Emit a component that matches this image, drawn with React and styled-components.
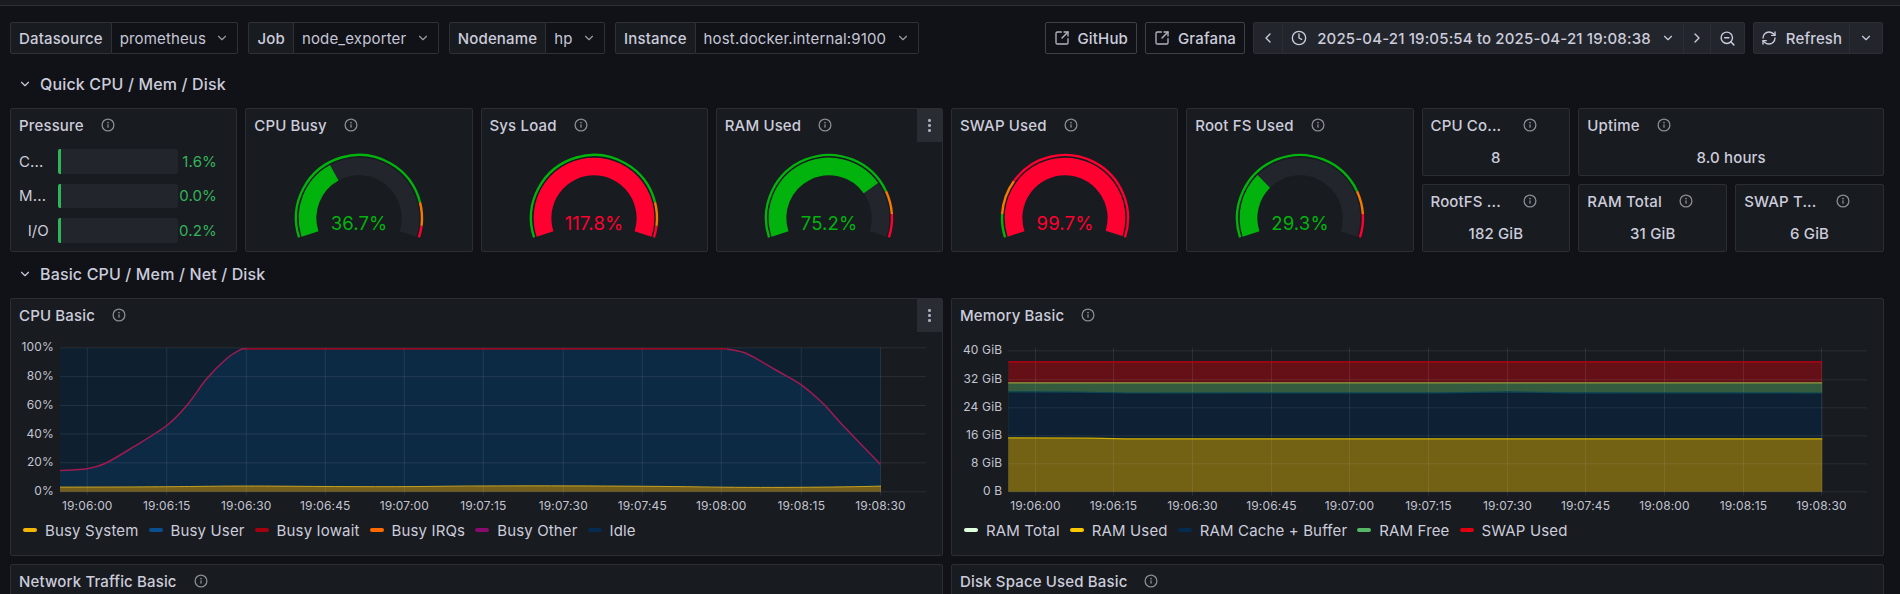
import React from "react";
import styled, { createGlobalStyle } from "styled-components";
import {
  ChevronDown,
  ChevronLeft,
  ChevronRight,
  Clock,
  RefreshCw,
  SquareArrowOutUpRight,
  ZoomOut,
} from "lucide-react";

const GlobalStyle = createGlobalStyle`
  html, body {
    margin: 0;
    height: 594px;
    overflow: hidden;
    background: #111217;
    color: #ccccdc;
    font-family: Inter, "Noto Sans", sans-serif;
    font-size: 15px;
    letter-spacing: 0.15px;
  }
  * { box-sizing: border-box; }
`;

const TopStrip = styled.div`
  height: 6px;
  background: #181b1f;
  border-bottom: 1px solid #2c2e34;
`;

const Page = styled.div`
  padding: 0 16px 0 10px;
`;

const Toolbar = styled.div`
  display: flex;
  align-items: center;
  height: 32px;
  margin-top: 16px;
  gap: 10px;
`;

const VarGroup = styled.div`
  display: flex;
  height: 32px;
`;

const VarLabel = styled.div`
  display: flex;
  align-items: center;
  padding: 0 8px;
  font-weight: 500;
  background: #181b1f;
  border: 1px solid #2f3137;
  border-radius: 2px 0 0 2px;
`;

const VarValue = styled.div`
  display: flex;
  align-items: center;
  gap: 9.5px;
  padding: 0 8px;
  background: #111217;
  border: 1px solid #2f3137;
  border-left: 0;
  border-radius: 0 2px 2px 0;
  color: #c5c6d6;
`;

const RightTools = styled.div`
  display: flex;
  align-items: center;
  margin-left: auto;
  margin-right: 1px;
  gap: 8px;
`;

const LinkButton = styled.div`
  display: flex;
  align-items: center;
  gap: 8px;
  height: 32px;
  padding: 0 8px;
  font-weight: 500;
  border: 1px solid #3f4148;
  border-radius: 2px;
`;

const ToolGroup = styled.div`
  display: flex;
  height: 32px;
  background: #22252b;
  border: 1px solid #2c2e34;
  border-radius: 2px;
`;

const ToolCell = styled.div`
  display: flex;
  align-items: center;
  justify-content: center;
  gap: ${(p) => p.$gap || 8}px;
  width: ${(p) => p.$w}px;
  font-weight: 500;
  & + & {
    border-left: 1px solid #2c2e34;
  }
`;

const SectionRow = styled.div`
  display: flex;
  align-items: center;
  gap: 8px;
  height: ${(p) => p.$h}px;
  padding: ${(p) => p.$pad};
  font-size: 16px;
  font-weight: 500;
`;

const Grid = styled.div`
  display: grid;
  grid-template-columns: repeat(24, 1fr);
  gap: 8px;
  grid-auto-rows: ${(p) => p.$row}px;
`;

const Panel = styled.div`
  position: relative;
  grid-column: span ${(p) => p.$span};
  grid-row: span ${(p) => p.$rows || 1};
  background: #181b1f;
  border: 1px solid #2b2d33;
  border-radius: 2px;
  overflow: hidden;
`;

const Header = styled.div`
  display: flex;
  align-items: center;
  gap: 16px;
  height: 32px;
  padding-left: 8px;
`;

const Title = styled.div`
  font-weight: 500;
  white-space: nowrap;
  ${(p) => p.$w && `width: ${p.$w}px;`}
`;

const Kebab = styled.div`
  position: absolute;
  top: 0;
  right: 0;
  display: flex;
  flex-direction: column;
  align-items: center;
  justify-content: center;
  gap: 2.5px;
  width: 25px;
  height: 33px;
  background: #2a2c33;
  i {
    width: 2.5px;
    height: 2.5px;
    border-radius: 50%;
    background: #a9aab8;
  }
`;

const GaugeBody = styled.div`
  display: flex;
  justify-content: center;
`;

const PressureList = styled.div`
  display: flex;
  flex-direction: column;
  gap: 10px;
  padding: 8px 0 0 8px;
`;

const PressureRow = styled.div`
  display: flex;
  align-items: center;
  height: 24.5px;
`;

const PressureLabel = styled.div`
  width: 30px;
  margin-right: 9px;
  text-align: ${(p) => (p.$right ? "right" : "left")};
  white-space: nowrap;
`;

const PressureBar = styled.div`
  width: 120px;
  height: 100%;
  background: #22252b;
  border-radius: 2px;
  overflow: hidden;
  &::before {
    content: "";
    display: block;
    width: 3px;
    height: 100%;
    background: #2fb65a;
  }
`;

const PressureValue = styled.div`
  width: 39px;
  text-align: right;
  font-size: 15px;
  color: #34b45b;
`;

const StatValue = styled.div`
  text-align: center;
  font-weight: 500;
  line-height: 33px;
`;

const Legend = styled.div`
  display: flex;
  align-items: center;
  gap: 10px;
  height: 20px;
  padding-left: 12px;
`;

const LegendItem = styled.div`
  display: flex;
  align-items: center;
  gap: 8px;
  &::before {
    content: "";
    width: 14px;
    height: 4px;
    border-radius: 2px;
    background: ${(p) => p.$color};
  }
`;

const ChartSvg = styled.svg`
  display: block;
  text {
    font-family: Inter, sans-serif;
    font-size: 12px;
    fill: #c3c4d2;
  }
`;

const InfoIcon = () => (
  <svg width="16" height="16" viewBox="0 0 16 16" fill="none" style={{ flex: "none" }}>
    <circle cx="8" cy="8" r="5.9" stroke="#8b8c95" strokeWidth="1.3" />
    <circle cx="8" cy="5.6" r="0.85" fill="#8b8c95" />
    <rect x="7.35" y="7.2" width="1.3" height="3.5" rx="0.5" fill="#8b8c95" />
  </svg>
);

const PanelHead = ({ title, w }) => (
  <Header>
    <Title $w={w}>{title}</Title>
    <InfoIcon />
  </Header>
);

const GREEN = "#02b30e";
const ORANGE = "#f77a00";
const RED = "#ff0030";
const TRACK = "#22252b";

const point = (cx, cy, r, t) => {
  const a = ((-18 + 216 * t) * Math.PI) / 180;
  return [cx - r * Math.cos(a), cy - r * Math.sin(a)];
};

const arc = (cx, cy, r, t1, t2) => {
  const [x1, y1] = point(cx, cy, r, t1);
  const [x2, y2] = point(cx, cy, r, t2);
  const large = (t2 - t1) * 216 > 180 ? 1 : 0;
  return `M${x1} ${y1}A${r} ${r} 0 ${large} 1 ${x2} ${y2}`;
};

const Gauge = ({ value, low, high, color }) => {
  const fill = Math.min(value / 100, 1);
  return (
    <GaugeBody>
      <svg width="140" height="102" viewBox="0 0 140 102" fill="none">
        <path d={arc(70, 77, 51.5, 0, 1)} stroke={TRACK} strokeWidth="17.7" />
        <path d={arc(70, 77, 51.5, 0, fill)} stroke={color} strokeWidth="17.7" />
        <path d={arc(70, 77, 63, 0, low)} stroke={GREEN} strokeWidth="2.4" />
        <path d={arc(70, 77, 63, low, high)} stroke={ORANGE} strokeWidth="2.4" />
        <path d={arc(70, 77, 63, high, 1)} stroke={RED} strokeWidth="2.4" />
        <text
          x="70"
          y="82.4"
          textAnchor="middle"
          dominantBaseline="central"
          fill={color}
          fontFamily="Inter, sans-serif"
          fontSize="18.5"
        >
          {value.toFixed(1)}%
        </text>
      </svg>
    </GaugeBody>
  );
};

// catmull-rom through the points, good enough for these curves
const smooth = (pts) => {
  let d = `M${pts[0][0]} ${pts[0][1]}`;
  for (let i = 0; i < pts.length - 1; i++) {
    const p0 = pts[i - 1] || pts[i];
    const p1 = pts[i];
    const p2 = pts[i + 1];
    const p3 = pts[i + 2] || p2;
    const c1x = p1[0] + (p2[0] - p0[0]) / 6;
    const c1y = p1[1] + (p2[1] - p0[1]) / 6;
    const c2x = p2[0] - (p3[0] - p1[0]) / 6;
    const c2y = p2[1] - (p3[1] - p1[1]) / 6;
    d += `C${c1x} ${c1y} ${c2x} ${c2y} ${p2[0]} ${p2[1]}`;
  }
  return d;
};

const TIMES = [
  "19:06:00", "19:06:15", "19:06:30", "19:06:45", "19:07:00", "19:07:15",
  "19:07:30", "19:07:45", "19:08:00", "19:08:15", "19:08:30",
];

const CPU_TICKS = [87.3, 166.7, 246.3, 325.3, 404.3, 483.3, 563.3, 642.3, 721.3, 801.3, 880.5];
const MEM_TICKS = [1035.3, 1113.3, 1192.3, 1271.3, 1349.3, 1428.3, 1507.3, 1585.3, 1664.3, 1743.3, 1821.3];

const CPU_LINE_UP = [
  [60, 470], [87, 468.3], [105, 463], [133, 446.7], [166.7, 425], [186.7, 405],
  [206.7, 378.3], [226.7, 358], [240, 349.3], [246, 348.4],
];
const CPU_LINE_DOWN = [
  [726.7, 348.4], [743, 351.7], [756.7, 358.3], [776.7, 370], [801.3, 384.3],
  [823.3, 403.3], [843, 425], [880.5, 464],
];

const gridStroke = "rgba(204,204,220,0.11)";

// x/y in these charts are page coordinates, the viewBox shifts them into the panel
const Axes = ({ yTicks, xTicks, left, right }) => (
  <>
    {yTicks.map(([label, y]) => (
      <g key={label}>
        <line x1={left} x2={right} y1={y} y2={y} stroke={gridStroke} />
        <text x={left - 6} y={y + 3.6} textAnchor="end">{label}</text>
      </g>
    ))}
    {xTicks.map((x, i) => (
      <g key={x}>
        <line x1={x} x2={x} y1="347" y2="495" stroke={gridStroke} />
        <text x={x} y="509.5" textAnchor="middle">{TIMES[i]}</text>
      </g>
    ))}
  </>
);

const CpuChart = () => {
  const up = smooth(CPU_LINE_UP);
  const down = smooth(CPU_LINE_DOWN);
  return (
    <ChartSvg width="931" height="189" viewBox="11 330.5 931 189" fill="none">
      <rect x="60" y="347.3" width="821" height="144" fill="#0e2030" />
      <path
        d={`${up}L726.7 348.4${down.replace(/^M[^C]+/, "")}L880.5 491.3L60 491.3Z`}
        fill="#0d2a45"
      />
      <path
        d="M60 486.6C200 486.6 210 485.2 270 485.6S380 486.6 440 485.8S640 485.4 700 486.4S840 486.8 881 485.6V491.3H60Z"
        fill="#735e1c"
      />
      <path
        d="M60 486.6C200 486.6 210 485.2 270 485.6S380 486.6 440 485.8S640 485.4 700 486.4S840 486.8 881 485.6"
        stroke="#c7a220"
        strokeWidth="1"
      />
      <Axes
        left={60}
        right={926}
        xTicks={CPU_TICKS}
        yTicks={[["100%", 347.3], ["80%", 376.1], ["60%", 405], ["40%", 433.4], ["20%", 462.3], ["0%", 491.3]]}
      />
      <path d={up} stroke="#a01a50" strokeWidth="1.5" />
      <path d="M246 348.4H726.7" stroke="#c4001a" strokeWidth="1.4" />
      <path d={down} stroke="#a01a50" strokeWidth="1.5" />
    </ChartSvg>
  );
};

// tops of the stacked memory areas, they only move by a pixel or so
const MEM_TOPS = {
  swap: "M1008 361.3H1822",
  free: "M1008 382.3H1822",
  cache: "M1008 391.3L1080 391.6L1125 392.5L1440 392.4L1507 391.3L1570 392.3L1822 392.5",
  used: "M1008 437.4L1090 437.7L1125 438.3H1822",
};

const MEM_BANDS = [
  { top: MEM_TOPS.swap, fill: "#651017", line: "#c2000f" },
  { top: MEM_TOPS.free, fill: "#345b3d", line: "#8f9a3c" },
  { top: MEM_TOPS.cache, fill: "#0e2033", line: "#0b4858" },
  { top: MEM_TOPS.used, fill: "#736114", line: "#cfae00" },
];

const MemChart = () => (
  <ChartSvg width="931" height="189" viewBox="951.8 330.5 931 189" fill="none">
    {MEM_BANDS.map((b) => (
      <path key={b.top} d={`${b.top}V491.3H1008Z`} fill={b.fill} />
    ))}
    <Axes
      left={1008}
      right={1867}
      xTicks={MEM_TICKS}
      yTicks={[["40 GiB", 350.3], ["32 GiB", 379.3], ["24 GiB", 407.3], ["16 GiB", 435.3], ["8 GiB", 463.3], ["0 B", 491.3]]}
    />
    {MEM_BANDS.map((b) => (
      <path key={b.top} d={b.top} stroke={b.line} strokeWidth="1.2" />
    ))}
  </ChartSvg>
);

const VARIABLES = [
  ["Datasource", "prometheus"],
  ["Job", "node_exporter"],
  ["Nodename", "hp"],
  ["Instance", "host.docker.internal:9100"],
];

const GAUGES = [
  { title: "CPU Busy", value: 36.7, low: 0.85, high: 0.95, color: GREEN },
  { title: "Sys Load", value: 117.8, low: 0.85, high: 0.95, color: RED },
  { title: "RAM Used", value: 75.2, low: 0.8, high: 0.9, color: GREEN, menu: true },
  { title: "SWAP Used", value: 99.7, low: 0.1, high: 0.25, color: RED },
  { title: "Root FS Used", value: 29.3, low: 0.8, high: 0.9, color: GREEN },
];

const PRESSURE = [
  { label: "C...", value: "1.6%" },
  { label: "M...", value: "0.0%" },
  { label: "I/O", value: "0.2%", right: true },
];

const CPU_LEGEND = [
  ["Busy System", "#f2b705"],
  ["Busy User", "#0a4f8f"],
  ["Busy Iowait", "#a50010"],
  ["Busy IRQs", "#ff6a00"],
  ["Busy Other", "#8a0a6e"],
  ["Idle", "#052b51"],
];

const MEM_LEGEND = [
  ["RAM Total", "#e0ffdf"],
  ["RAM Used", "#f9c800"],
  ["RAM Cache + Buffer", "#052b51"],
  ["RAM Free", "#56b866"],
  ["SWAP Used", "#e0000f"],
];

const Menu = () => (
  <Kebab>
    <i />
    <i />
    <i />
  </Kebab>
);

const StatPanel = ({ title, value, span, w }) => (
  <Panel $span={span}>
    <PanelHead title={title} w={w} />
    <StatValue>{value}</StatValue>
  </Panel>
);

const App = () => (
  <>
    <GlobalStyle />
    <TopStrip />
    <Page>
      <Toolbar>
        {VARIABLES.map(([label, value]) => (
          <VarGroup key={label}>
            <VarLabel>{label}</VarLabel>
            <VarValue>
              {value}
              <ChevronDown size={14} color="#9a9ba6" />
            </VarValue>
          </VarGroup>
        ))}
        <RightTools>
          <LinkButton>
            <SquareArrowOutUpRight size={16} color="#b3b4c0" />
            GitHub
          </LinkButton>
          <LinkButton>
            <SquareArrowOutUpRight size={16} color="#b3b4c0" />
            Grafana
          </LinkButton>
          <ToolGroup>
            <ToolCell $w={28}>
              <ChevronLeft size={16} />
            </ToolCell>
            <ToolCell $w={401} $gap={10}>
              <Clock size={16} />
              2025-04-21 19:05:54 to 2025-04-21 19:08:38
              <ChevronDown size={14} />
            </ToolCell>
            <ToolCell $w={27}>
              <ChevronRight size={16} />
            </ToolCell>
            <ToolCell $w={34}>
              <ZoomOut size={17} />
            </ToolCell>
          </ToolGroup>
          <ToolGroup>
            <ToolCell $w={95} $gap={9}>
              <RefreshCw size={16} />
              Refresh
            </ToolCell>
            <ToolCell $w={33}>
              <ChevronDown size={14} />
            </ToolCell>
          </ToolGroup>
        </RightTools>
      </Toolbar>

      <SectionRow $h={54} $pad="6px 0 0 8px">
        <ChevronDown size={14} />
        Quick CPU / Mem / Disk
      </SectionRow>

      <Grid $row={68}>
        <Panel $span={3} $rows={2}>
          <PanelHead title="Pressure" />
          <PressureList>
            {PRESSURE.map((row) => (
              <PressureRow key={row.label}>
                <PressureLabel $right={row.right}>{row.label}</PressureLabel>
                <PressureBar />
                <PressureValue>{row.value}</PressureValue>
              </PressureRow>
            ))}
          </PressureList>
        </Panel>
        {GAUGES.map((g) => (
          <Panel key={g.title} $span={3} $rows={2}>
            <PanelHead title={g.title} />
            {g.menu && <Menu />}
            <Gauge value={g.value} low={g.low} high={g.high} color={g.color} />
          </Panel>
        ))}
        <StatPanel span={2} title="CPU Co..." value="8" w={75} />
        <StatPanel span={4} title="Uptime" value="8.0 hours" />
        <StatPanel span={2} title="RootFS ..." value="182 GiB" w={75} />
        <StatPanel span={2} title="RAM Total" value="31 GiB" w={75} />
        <StatPanel span={2} title="SWAP T..." value="6 GiB" w={75} />
      </Grid>

      <SectionRow $h={46} $pad="0 0 2px 8px">
        <ChevronDown size={14} />
        Basic CPU / Mem / Net / Disk
      </SectionRow>

      <Grid $row={258}>
        <Panel $span={12}>
          <PanelHead title="CPU Basic" />
          <Menu />
          <CpuChart />
          <Legend>
            {CPU_LEGEND.map(([name, color]) => (
              <LegendItem key={name} $color={color}>{name}</LegendItem>
            ))}
          </Legend>
        </Panel>
        <Panel $span={12}>
          <PanelHead title="Memory Basic" />
          <MemChart />
          <Legend>
            {MEM_LEGEND.map(([name, color]) => (
              <LegendItem key={name} $color={color}>{name}</LegendItem>
            ))}
          </Legend>
        </Panel>
        <Panel $span={12}>
          <PanelHead title="Network Traffic Basic" />
        </Panel>
        <Panel $span={12}>
          <PanelHead title="Disk Space Used Basic" />
        </Panel>
      </Grid>
    </Page>
  </>
);

export default App;
